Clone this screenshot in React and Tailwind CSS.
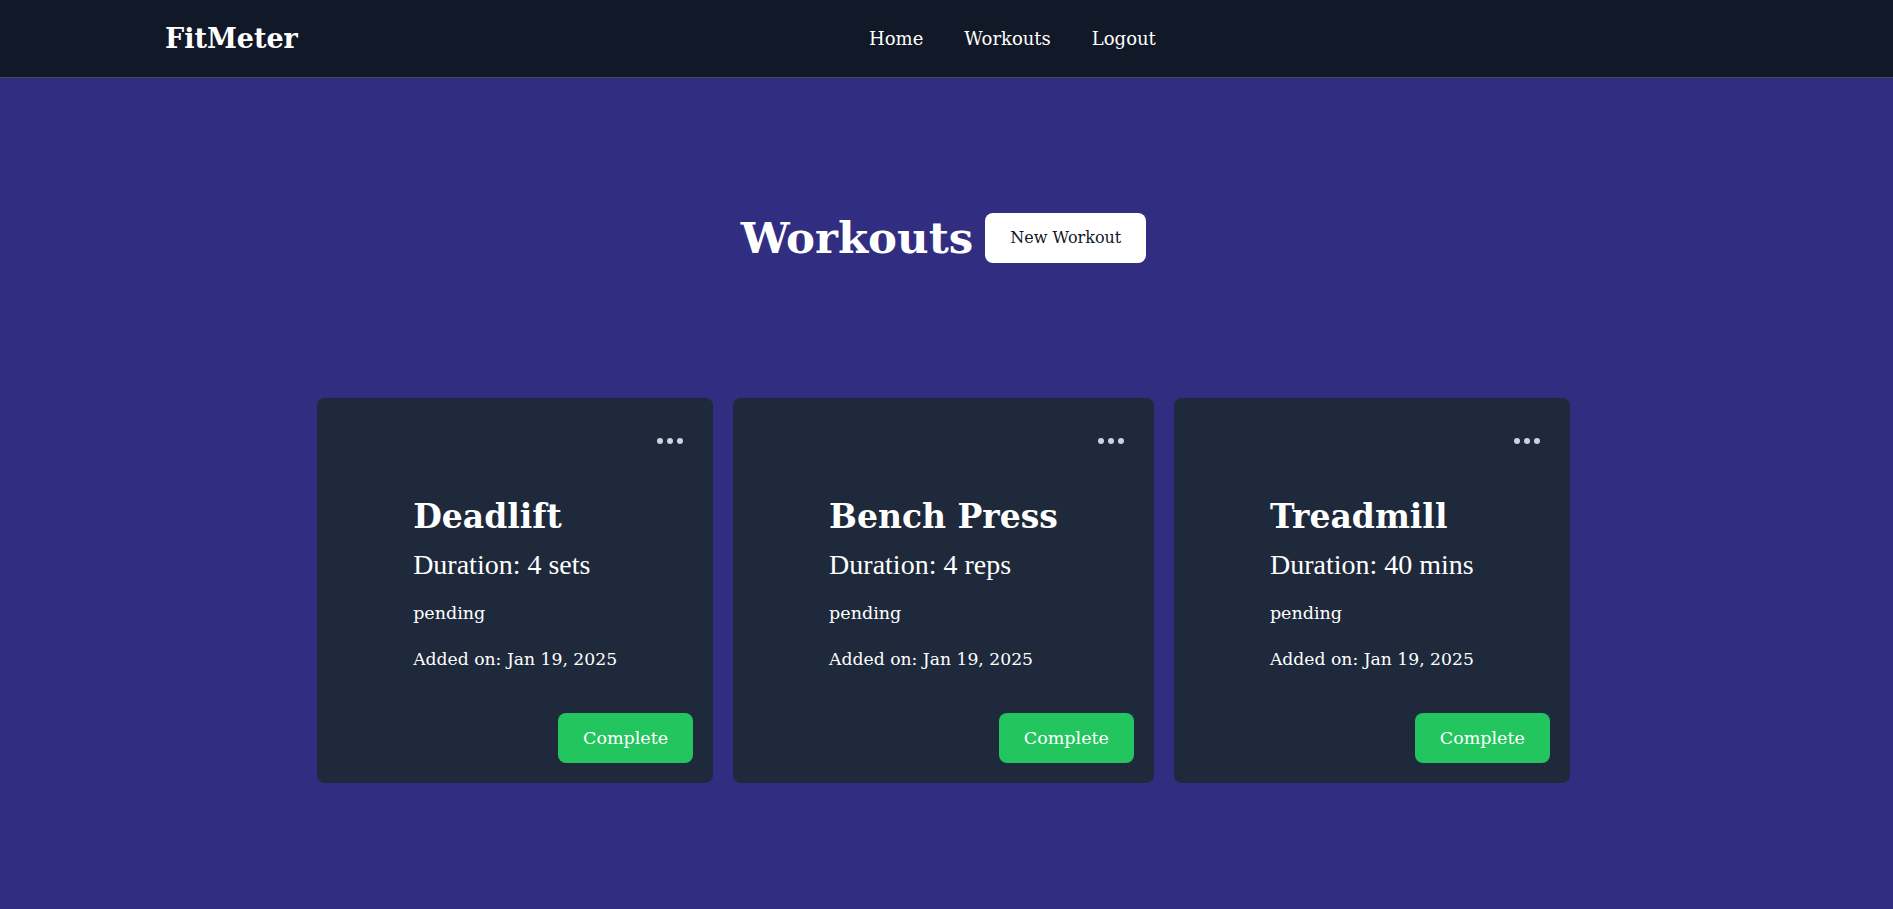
import React from "react";

const workouts = [
    { id: 1, name: "Deadlift", duration: "4 sets", status: "pending", added: "Jan 19, 2025" },
    { id: 2, name: "Bench Press", duration: "4 reps", status: "pending", added: "Jan 19, 2025" },
    { id: 3, name: "Treadmill", duration: "40 mins", status: "pending", added: "Jan 19, 2025" },
];

function Dots() {
    return (
        <svg width="26" height="6" viewBox="0 0 26 6" className="text-slate-300">
            <circle cx="3" cy="3" r="3" fill="currentColor" />
            <circle cx="13" cy="3" r="3" fill="currentColor" />
            <circle cx="23" cy="3" r="3" fill="currentColor" />
        </svg>
    );
}

function Navbar() {
    return (
        <header className="h-[78px] bg-[#111827] border-b border-[#3f4756] flex items-center justify-between pl-[165px] pr-[166px]">
            <a href="#" className="text-[27px] font-bold text-white leading-none">
                FitMeter
            </a>
            <nav className="flex items-center gap-[41px] text-[18px] text-white">
                <a href="#">Home</a>
                <a href="#">Workouts</a>
                <a href="#">Logout</a>
            </nav>
            <div />
        </header>
    );
}

function WorkoutCard({ workout }) {
    return (
        <div className="bg-[#1e293b] rounded-lg p-5 flex flex-col text-white">
            <div className="flex justify-end pr-2.5 pt-5">
                <button className="leading-none">
                    <Dots />
                </button>
            </div>
            <div className="px-[76px]">
                <h2 className="mt-[53px] text-[33px] leading-[40px] font-bold whitespace-nowrap">
                    {workout.name}
                </h2>
                <p className="mt-[10px] text-[28px] leading-[36px] font-['Liberation_Serif',serif] whitespace-nowrap">
                    Duration: {workout.duration}
                </p>
                <p className="mt-[16px] text-[17.5px] leading-[28px]">{workout.status}</p>
                <p className="mt-[18px] text-[17.2px] leading-[28px] whitespace-nowrap">
                    Added on: {workout.added}
                </p>
            </div>
            <button className="self-end mt-[40px] h-[50px] px-[25px] rounded-lg bg-[#22c55e] text-white text-[17.5px]">
                Complete
            </button>
        </div>
    );
}

export default function App() {
    return (
        <div className="min-h-screen bg-[#312e81] font-['DejaVu_Serif',serif]">
            <Navbar />
            <main className="pt-[135px] pb-20 pr-1.5 flex flex-col items-center gap-[135px]">
                <div className="flex items-center gap-3">
                    <h1 className="text-[43.5px] font-bold text-white leading-none">Workouts</h1>
                    <button className="h-[50px] px-[25px] bg-white text-[#111827] text-[16px] rounded-lg">
                        New Workout
                    </button>
                </div>
                <div className="flex gap-5">
                    {workouts.map((w) => (
                        <WorkoutCard key={w.id} workout={w} />
                    ))}
                </div>
            </main>
        </div>
    );
}
